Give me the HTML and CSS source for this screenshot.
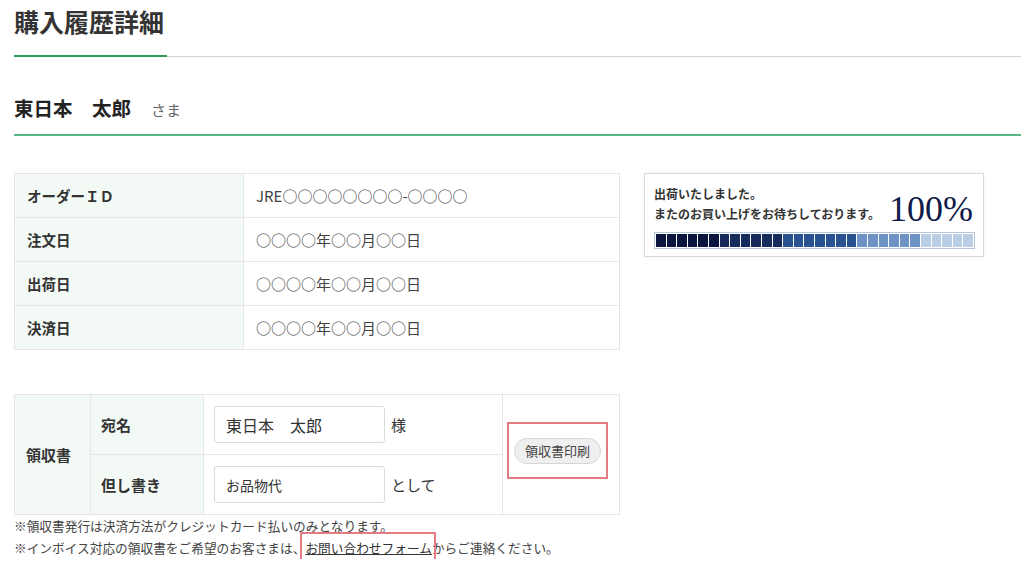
FILE: index.html
```html
<!DOCTYPE html>
<html lang="ja">

<head>
    <meta charset="UTF-8">
    <meta name="viewport" content="width=device-width, initial-scale=1.0">
    <title>購入履歴詳細</title>
    <link rel="stylesheet" href="styles.css">
</head>

<body>
    <div class="page">
        <div class="page-head">
            <h1>購入履歴詳細</h1>
        </div>

        <div class="customer">
            <span class="customer-name">東日本　太郎</span>
            <span class="customer-suffix">さま</span>
        </div>

        <div class="detail">
            <div class="detail-main">
                <table class="info">
                    <tr>
                        <th>オーダーＩＤ</th>
                        <td>JRE○○○○○○○○-○○○○</td>
                    </tr>
                    <tr>
                        <th>注文日</th>
                        <td>○○○○年○○月○○日</td>
                    </tr>
                    <tr>
                        <th>出荷日</th>
                        <td>○○○○年○○月○○日</td>
                    </tr>
                    <tr>
                        <th>決済日</th>
                        <td>○○○○年○○月○○日</td>
                    </tr>
                </table>

                <table class="receipt">
                    <tr>
                        <th class="rc-title" rowspan="2">領収書</th>
                        <th class="rc-label">宛名</th>
                        <td class="rc-field">
                            <div class="field">
                                <input type="text" class="input-field" value="東日本　太郎">
                                <span>様</span>
                            </div>
                        </td>
                        <td class="rc-action" rowspan="2">
                            <div class="print-box">
                                <button class="button">領収書印刷</button>
                            </div>
                        </td>
                    </tr>
                    <tr>
                        <th class="rc-label">但し書き</th>
                        <td class="rc-field">
                            <div class="field">
                                <input type="text" class="input-field small" value="お品物代">
                                <span>として</span>
                            </div>
                        </td>
                    </tr>
                </table>

                <p class="note">
                    ※領収書発行は決済方法がクレジットカード払いのみとなります。<br>
                    ※インボイス対応の領収書をご希望のお客さまは、<a href="#" class="mark">お問い合わせフォーム</a>からご連絡ください。
                </p>
            </div>

            <div class="status">
                <div class="status-top">
                    <p class="status-text">出荷いたしました。<br>またのお買い上げをお待ちしております。</p>
                    <span class="status-rate">100%</span>
                </div>
                <div class="status-bar">
                    <span class="s1"></span><span class="s1"></span><span class="s1"></span>
                    <span class="s1"></span><span class="s1"></span><span class="s1"></span>
                    <span class="s2"></span><span class="s2"></span><span class="s2"></span>
                    <span class="s2"></span><span class="s2"></span><span class="s2"></span>
                    <span class="s3"></span><span class="s3"></span><span class="s3"></span>
                    <span class="s3"></span><span class="s3"></span><span class="s3"></span>
                    <span class="s3"></span>
                    <span class="s4"></span><span class="s4"></span><span class="s4"></span>
                    <span class="s4"></span><span class="s4"></span><span class="s4"></span>
                    <span class="s5"></span><span class="s5"></span><span class="s5"></span>
                    <span class="s5"></span><span class="s5"></span>
                </div>
            </div>
        </div>
    </div>
</body>

</html>
```

FILE: styles.css
```css
body {
    font-family: "Noto Sans CJK JP", "Noto Sans", sans-serif;
    background-color: #fff;
    color: #333;
    margin: 0;
    padding: 0;
}

.page {
    padding-left: 14px;
}

.page-head {
    padding-top: 4px;
    border-bottom: 1px solid #d4d4d4;
}

.page-head h1 {
    display: inline-block;
    margin: 0 0 -1px;
    padding: 0 3px 17px 0;
    font-size: 25px;
    line-height: 34px;
    font-weight: bold;
    color: #333;
    border-bottom: 2px solid #2f9a5e;
}

.customer {
    display: flex;
    align-items: baseline;
    gap: 20px;
    margin-top: 37px;
    padding-bottom: 10px;
    line-height: 28px;
    border-bottom: 2px solid #5cb585;
}

.customer-name {
    font-size: 19.5px;
    font-weight: bold;
    color: #222;
}

.customer-suffix {
    font-size: 15px;
    color: #666;
}

.detail {
    display: flex;
    align-items: flex-start;
    gap: 24px;
    margin-top: 37px;
}

.detail-main {
    width: 606px;
}

/* order info */
.info {
    width: 606px;
    border-collapse: collapse;
    table-layout: fixed;
}

.info th,
.info td {
    border: 1px solid #e6e6e6;
    padding: 11px 12px;
    line-height: 21px;
    text-align: left;
}

.info th {
    width: 204px;
    background-color: #f3faf6;
    font-size: 14.5px;
    font-weight: bold;
    color: #333;
}

.info td {
    font-size: 15px;
    color: #444;
}

/* receipt */
.receipt {
    width: 606px;
    margin-top: 44px;
    border-collapse: collapse;
    table-layout: fixed;
}

.receipt th,
.receipt td {
    border: 1px solid #e6e6e6;
    padding: 0;
    text-align: left;
    vertical-align: middle;
}

.receipt th {
    background-color: #f3faf6;
    font-size: 15px;
    font-weight: bold;
    color: #333;
}

.receipt th.rc-title {
    width: 64px;
    padding-left: 11px;
}

.receipt th.rc-label {
    width: 102px;
    padding-left: 10px;
}

.receipt td.rc-field {
    width: 288px;
    height: 59px;
    padding-left: 10px;
}

.field {
    display: flex;
    align-items: center;
    gap: 6px;
    font-size: 15px;
    color: #333;
}

.input-field {
    box-sizing: border-box;
    width: 171px;
    height: 37px;
    padding: 0 11px;
    border: 1px solid #dadada;
    border-radius: 3px;
    font-family: inherit;
    font-size: 16px;
    color: #333;
}

.input-field.small {
    font-size: 14px;
}

.print-box {
    box-sizing: border-box;
    width: 101px;
    height: 57px;
    margin: 0 0 8px 4px;
    border: 2px solid #e27b82;
    display: flex;
    align-items: center;
    justify-content: center;
}

.button {
    background-color: #efefef;
    color: #444;
    border: 1px solid #d6d6d6;
    padding: 3px 10px;
    border-radius: 13px;
    font-family: inherit;
    font-size: 13px;
    line-height: 18px;
    cursor: pointer;
}

.note {
    margin: 0;
    font-size: 12.7px;
    line-height: 22px;
    color: #444;
}

.mark {
    position: relative;
    color: #333;
    text-decoration: underline;
}

.mark::after {
    content: "";
    position: absolute;
    left: -5px;
    right: -4px;
    top: -6px;
    bottom: -8px;
    border: 2px solid #e27b82;
}

/* shipping status */
.status {
    width: 340px;
    box-sizing: border-box;
    padding: 10px 8px 7px 9px;
    border: 1px solid #d9d9d9;
    box-shadow: 0 0 2px rgba(0, 0, 0, 0.08);
}

.status-top {
    display: flex;
    align-items: flex-end;
    justify-content: space-between;
}

.status-text {
    margin: 0;
    font-size: 12px;
    line-height: 20px;
    font-weight: bold;
    color: #333;
}

.status-rate {
    margin: 0 2px -3px 0;
    font-family: "Liberation Serif", serif;
    font-size: 36px;
    line-height: 36px;
    color: #101a48;
}

.status-bar {
    display: grid;
    grid-template-columns: repeat(30, 1fr);
    gap: 1px;
    height: 17px;
    box-sizing: border-box;
    margin-top: 8px;
    padding: 1px;
    border: 1px solid #b9c5d8;
    background-color: #fff;
}

.status-bar span {
    display: block;
}

.s1 {
    background-color: #0b1540;
}

.s2 {
    background-color: #162b5c;
}

.s3 {
    background-color: #2b5290;
}

.s4 {
    background-color: #6d93c5;
}

.s5 {
    background-color: #bacee6;
}
```
